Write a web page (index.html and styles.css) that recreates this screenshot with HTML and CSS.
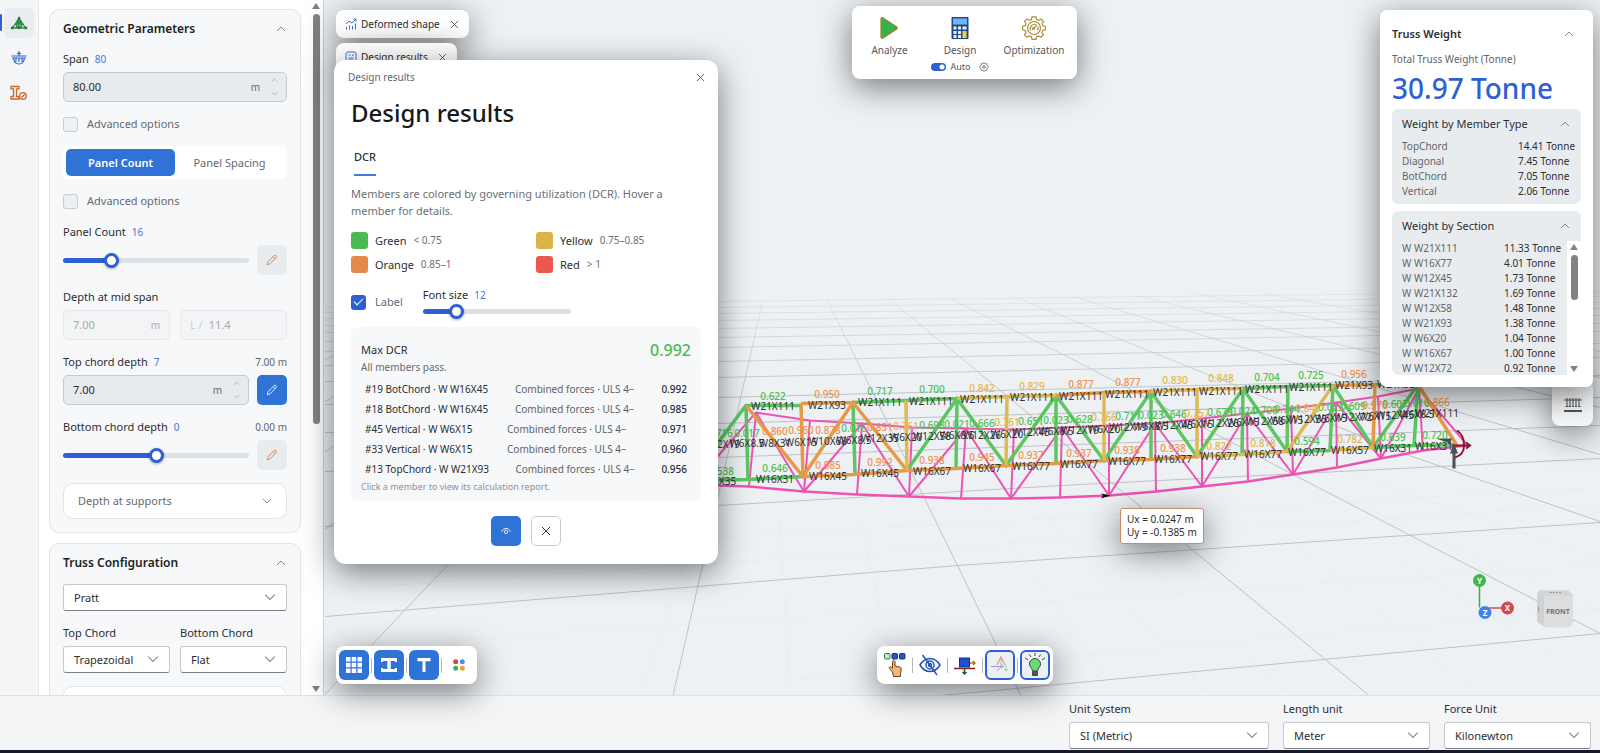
FILE: index.html
```html
<!DOCTYPE html>
<html lang="en">
<head>
<meta charset="utf-8">
<title>Truss Designer</title>
<link rel="stylesheet" href="styles.css">
</head>
<body>
<svg class="defs" aria-hidden="true">
  <symbol id="up" viewBox="0 0 10 10"><path d="M1 7l4-4 4 4" fill="none" stroke="currentColor"/></symbol>
  <symbol id="down" viewBox="0 0 10 10"><path d="M1 3l4 4 4-4" fill="none" stroke="currentColor"/></symbol>
  <symbol id="close" viewBox="0 0 10 10"><path d="M1 1l8 8M9 1l-8 8" fill="none" stroke="currentColor"/></symbol>
  <symbol id="pencil" viewBox="0 0 14 14"><path d="M1.500 12.500l.8-3.300 7-7.200a1.500 1.500 0 0 1 2.400 2.300l-7.100 7.300zM8.300 3.200l2.300 2.200" fill="none" stroke="currentColor" stroke-linejoin="round"/></symbol>
</svg>
<div class="app">
  <main class="workspace">
    <nav class="rail" aria-label="Modules">
      <button class="rail-btn active" aria-label="Geometry"><svg width="18" height="14" viewBox="0 0 18 14"><path d="M9 2L2.500 12h13zM9 2v10M9 2L6 12M9 2l3 10M5.500 8L9 12l3.500-4M5.500 8h7" fill="none" stroke="#2f8a45" stroke-width="1.300"/><g fill="#237638"><circle cx="9" cy="2" r="1.300"/><circle cx="2.200" cy="12" r="1.400"/><circle cx="9" cy="12" r="1.200"/><circle cx="15.800" cy="12" r="1.400"/></g></svg></button>
      <button class="rail-btn" aria-label="Loads"><svg width="16" height="16" viewBox="0 0 16 16" fill="none" stroke="#2f60d3" stroke-width="1.200"><path d="M8 1v5M6 3.500h4M.500 6h15M1 8h14M2.500 8C3 11.500 5 14 8 14s5-2.500 5.500-6M5 8.500v3M8 8.500v3.500M11 8.500v3"/></svg></button>
      <button class="rail-btn" aria-label="Sections"><svg width="18" height="16" viewBox="0 0 18 16" fill="none" stroke="#c9682c" stroke-width="1.300"><path d="M1 1.500h8v2.300H6.500v7.700H9v2.500H1v-2.500h2.500V3.800H1z"/><circle cx="13" cy="11" r="3.300" fill="#f3f5f7"/><path d="M11.500 12.500l3.300-3.300"/></svg></button>
    </nav>

    <aside class="side">
      <div class="side-list">
        <section class="card">
          <button class="card-title">Geometric Parameters<svg class="ic"><use href="#up"/></svg></button>
          <div class="group">
            <label class="label" for="span">Span <b>80</b></label>
            <div class="box"><input id="span" value="80.00"><span class="unit">m</span><span class="spin"><svg><use href="#up"/></svg><svg><use href="#down"/></svg></span></div>
          </div>
          <label class="check"><input type="checkbox">Advanced options</label>
          <div class="seg"><button class="on">Panel Count</button><button>Panel Spacing</button></div>
          <label class="check"><input type="checkbox">Advanced options</label>
          <div class="group">
            <label class="label" for="count">Panel Count <b>16</b></label>
            <div class="row"><input class="range p26" id="count" type="range" min="0" max="100" value="24"><button class="edit" aria-label="Edit panel count"><svg><use href="#pencil"/></svg></button></div>
          </div>
          <div class="group">
            <label class="label" for="mid">Depth at mid span</label>
            <div class="pair"><div class="box off"><input id="mid" value="7.00" disabled><span class="unit">m</span></div><div class="box off"><span class="prefix">L /</span><input aria-label="Span ratio" value="11.4" disabled></div></div>
          </div>
          <div class="group">
            <label class="label" for="top">Top chord depth <b>7</b><span class="end">7.00 m</span></label>
            <div class="row"><div class="box"><input id="top" value="7.00"><span class="unit">m</span><span class="spin"><svg><use href="#up"/></svg><svg><use href="#down"/></svg></span></div><button class="edit on" aria-label="Edit top chord depth"><svg><use href="#pencil"/></svg></button></div>
          </div>
          <div class="group">
            <label class="label" for="bot">Bottom chord depth <b>0</b><span class="end">0.00 m</span></label>
            <div class="row"><input class="range p50" id="bot" type="range" min="0" max="100" value="50"><button class="edit" aria-label="Edit bottom chord depth"><svg><use href="#pencil"/></svg></button></div>
          </div>
          <button class="expander">Depth at supports<svg class="ic"><use href="#down"/></svg></button>
        </section>
        <section class="card">
          <button class="card-title">Truss Configuration<svg class="ic"><use href="#up"/></svg></button>
          <div class="select"><select aria-label="Truss type"><option>Pratt</option></select><svg><use href="#down"/></svg></div>
          <div class="pair">
            <div class="group"><label class="label" for="tc">Top Chord</label><div class="select"><select id="tc"><option>Trapezoidal</option></select><svg><use href="#down"/></svg></div></div>
            <div class="group"><label class="label" for="bc">Bottom Chord</label><div class="select"><select id="bc"><option>Flat</option></select><svg><use href="#down"/></svg></div></div>
          </div>
          <button class="expander" aria-label="More options"></button>
        </section>
      </div>
      <div class="scroll"><i class="tri up"></i><i class="thumb"></i><i class="tri down"></i></div>
    </aside>

    <section class="stage">
      <svg class="scene" viewBox="324 0 1276 696" preserveAspectRatio="xMidYMid slice">
        <defs><linearGradient id="fade" x1="0" y1="290" x2="0" y2="400" gradientUnits="userSpaceOnUse"><stop offset="0" stop-color="#c3c9ce" stop-opacity=".25"/><stop offset="1" stop-color="#bcc2c7"/></linearGradient></defs>
        <g fill="none" stroke="url(#fade)">
          <path d="M700 300L450 563 325 695M763 300L673 696M827 300L930 510 1021 696M889 300L963 360 1204 560 1369 696M952 300L1073 360 1297 477 1453 558 1600 634M1016 298L1412 457 1600 522M1073 297L1600 455M1136 296L1600 408M1200 295L1600 378M1262 294L1600 352M636 302L325 530M572 304L325 452M508 306L325 402M444 308L325 360"/>
          <path d="M930 697L1600 634M325 617L958 566 1600 523M325 527L718 506 1080 485 1600 459M325 472L718 458 1600 426M325 433L718 424 1600 398M325 405L718 398 1600 376M325 382L718 378 1600 358M325 366L718 362 1600 344M325 352L718 348 1600 332M325 342L718 338 1600 324M325 333L718 329 1600 316M325 326L718 321 1600 309M325 319L718 314 1600 303M325 313L718 308 1600 297M325 308L718 302 1600 292"/>
        </g>
        <g fill="none" stroke="#dfe4e8" stroke-width=".7" opacity=".5">
          <path d="M325 648L1600 566M325 590L1600 505M325 560L1600 488M800 680L1600 610M690 550L640 696M780 520L790 696M860 520L900 696M980 500L1120 696M1040 510L1210 696M1110 530L1290 696M1290 540L1480 696M1400 560L1560 660M1300 480L1600 610M1340 470L1600 560"/>
        </g>
        <g fill="none" stroke="#ee53b4" stroke-width="2" stroke-linejoin="round">
          <path stroke-width="2.500" d="M700 485L718 486 749 487 804 492 857 495 909 497 961 499 1011 499 1060 498 1109 496 1156 492 1202 487 1248 482 1293 475 1337 468 1381 459 1423 451 1466 446"/>
          <path d="M756 413L810 421 862 424 912 428 966 429 1014 430 1062 428 1109 426 1155 424 1202 419 1247 414 1291 409 1336 403 1378 397 1419 389"/>
          <path d="M756 413L749 487M810 421L804 492M862 424L857 495M912 428L909 497M966 429L961 499M1014 430L1011 499M1062 428L1060 498M1109 426V496M1155 424L1156 492M1202 419V487M1247 414L1248 482M1291 409L1293 475M1336 403L1337 468M1378 397L1381 459M1419 389L1423 451"/>
          <path d="M700 477L756 413 804 492 862 424 909 497 966 429 1011 499 1062 428 1109 496 1155 424 1202 487 1247 414 1293 475 1336 403 1381 459 1419 389 1466 444"/>
        </g>
        <g fill="none" stroke-width="3.500">
          <path stroke="#5dc561" d="M700 467L746 406H801M853 403L906 401 957 399M1243 389L1288 387 1333 386M1375 385H1418M700 481L748 480 803 477M1287 452L1330 451M1373 448L1414 446 1455 445M746 406L748 480M853 403L855 474M957 399L956 469M1056 396V464M1151 392V460M1243 389L1242 455M1288 387L1287 452M1333 386L1330 451M1418 385L1414 446M907 471L957 399 1006 466 1056 396 1104 461 1151 392 1197 457 1243 389 1287 452M1333 386L1373 448 1418 385"/>
          <path stroke="#e59a46" d="M801 404L853 403M1056 396L1104 393 1151 392M1333 386L1375 385M803 477L853 475 907 471 956 469 1006 466 1056 464 1104 461 1150 460 1197 457M801 404L803 477M1375 385L1373 448M746 406L803 477 853 403 907 471M1418 385L1457 446"/>
          <path stroke="#dfb951" d="M957 399L1007 397 1056 396M1151 392L1197 390 1243 389M1197 457L1242 455 1287 452M1330 451L1373 448M906 401L907 471M1007 397L1006 466M1104 393V461M1197 390V457M1287 452L1333 386"/>
        </g>
        <g stroke-width="2" fill="none"><path d="M1457 431C1462 434 1464 439 1464 446S1461 456 1455 458M1452 446H1470M1466 443l4 3-4 3" stroke="#8f1230"/><path d="M1454 469V450" stroke="#4a4f55" stroke-width="3"/><path d="M1450 454L1454 444 1458 454zM1436 439l16 0-2 5z" fill="#4a4f55"/><path d="M1101 494l10 2-10 3 2-3z" fill="#111"/></g>
        <text class="g"><tspan x="773" y="400">0.622</tspan><tspan x="880" y="395">0.717</tspan><tspan x="932" y="393">0.700</tspan><tspan x="1267" y="381">0.704</tspan><tspan x="1311" y="379">0.725</tspan><tspan x="724" y="475">.538</tspan><tspan x="775" y="472">0.646</tspan><tspan x="1307" y="445">0.594</tspan><tspan x="1393" y="441">0.639</tspan><tspan x="1435" y="439">0.720</tspan><tspan x="720" y="437">0.716</tspan><tspan x="747" y="437">0.017</tspan><tspan x="854" y="432">0.016</tspan><tspan x="932" y="429">0.698</tspan><tspan x="957" y="428">0.021</tspan><tspan x="982" y="427">0.666</tspan><tspan x="1031" y="425">0.651</tspan><tspan x="1056" y="424">0.023</tspan><tspan x="1080" y="423">0.628</tspan><tspan x="1128" y="420">0.711</tspan><tspan x="1151" y="419">0.023</tspan><tspan x="1174" y="418">0.646</tspan><tspan x="1220" y="416">0.679</tspan><tspan x="1243" y="415">0.024</tspan><tspan x="1265" y="414">0.700</tspan><tspan x="1287" y="413">0.744</tspan><tspan x="1331" y="411">0.023</tspan><tspan x="1353" y="410">0.609</tspan><tspan x="1395" y="408">0.607</tspan><tspan x="1417" y="407">0.016</tspan></text>
        <text class="o"><tspan x="827" y="398">0.950</tspan><tspan x="1081" y="388">0.877</tspan><tspan x="1128" y="386">0.877</tspan><tspan x="1354" y="378">0.956</tspan><tspan x="828" y="469">0.985</tspan><tspan x="880" y="466">0.992</tspan><tspan x="932" y="464">0.938</tspan><tspan x="982" y="461">0.945</tspan><tspan x="1031" y="459">0.937</tspan><tspan x="1079" y="457">0.937</tspan><tspan x="1127" y="454">0.938</tspan><tspan x="1173" y="452">0.938</tspan><tspan x="775" y="435">0.860</tspan><tspan x="801" y="434">0.960</tspan><tspan x="828" y="434">0.878</tspan><tspan x="880" y="431">0.851</tspan><tspan x="1375" y="409">0.976</tspan><tspan x="1437" y="406">0.866</tspan></text>
        <text class="y"><tspan x="982" y="392">0.842</tspan><tspan x="1032" y="390">0.829</tspan><tspan x="1175" y="384">0.830</tspan><tspan x="1221" y="382">0.848</tspan><tspan x="1219" y="450">0.822</tspan><tspan x="1263" y="447">0.818</tspan><tspan x="1350" y="443">0.782</tspan><tspan x="906" y="430">0.761</tspan><tspan x="1007" y="426">0.761</tspan><tspan x="1104" y="421">0.766</tspan><tspan x="1197" y="417">0.757</tspan><tspan x="1308" y="412">0.845</tspan></text>
        <text class="k"><tspan x="773" y="410">W21X111</tspan><tspan x="827" y="409">W21X93</tspan><tspan x="880" y="406">W21X111</tspan><tspan x="931" y="405">W21X111</tspan><tspan x="982" y="403">W21X111</tspan><tspan x="1032" y="401">W21X111</tspan><tspan x="1081" y="400">W21X111</tspan><tspan x="1127" y="398">W21X111</tspan><tspan x="1175" y="396">W21X111</tspan><tspan x="1221" y="395">W21X111</tspan><tspan x="1267" y="393">W21X111</tspan><tspan x="1311" y="391">W21X111</tspan><tspan x="1354" y="389">W21X93</tspan><tspan x="1396" y="388">W21X93</tspan></text>
        <text class="k"><tspan x="720" y="485">W8X35</tspan><tspan x="775" y="483">W16X31</tspan><tspan x="828" y="480">W16X45</tspan><tspan x="880" y="477">W16X45</tspan><tspan x="932" y="475">W16X67</tspan><tspan x="982" y="472">W16X67</tspan><tspan x="1031" y="470">W16X77</tspan><tspan x="1079" y="468">W16X77</tspan><tspan x="1127" y="465">W16X77</tspan><tspan x="1173" y="463">W16X77</tspan><tspan x="1219" y="460">W16X77</tspan><tspan x="1263" y="458">W16X77</tspan><tspan x="1307" y="456">W16X77</tspan><tspan x="1350" y="454">W16X57</tspan><tspan x="1393" y="452">W16X31</tspan><tspan x="1434" y="450">W16X31</tspan></text>
        <text class="k"><tspan x="721" y="448">W12X19</tspan><tspan x="747" y="447">W6X8.5</tspan><tspan x="775" y="447">W8X31</tspan><tspan x="801" y="446">W6X15</tspan><tspan x="828" y="445">W10X68</tspan><tspan x="854" y="444">W6X8.5</tspan><tspan x="880" y="442">W12X35</tspan><tspan x="906" y="441">W6X20</tspan><tspan x="932" y="440">W12X58</tspan><tspan x="957" y="439">W6X8.5</tspan><tspan x="982" y="439">W12X26</tspan><tspan x="1007" y="438">W6X20</tspan><tspan x="1031" y="436">W12X45</tspan><tspan x="1056" y="435">W6X8.5</tspan><tspan x="1080" y="434">W12X19</tspan><tspan x="1104" y="433">W6X20</tspan><tspan x="1128" y="431">W12X19</tspan><tspan x="1151" y="430">W6X8.5</tspan><tspan x="1174" y="429">W12X45</tspan><tspan x="1197" y="428">W6X15</tspan><tspan x="1220" y="427">W12X26</tspan><tspan x="1243" y="426">W6X15</tspan><tspan x="1265" y="425">W12X58</tspan><tspan x="1287" y="424">W6X15</tspan><tspan x="1308" y="423">W12X35</tspan><tspan x="1331" y="422">W6X15</tspan><tspan x="1353" y="421">W12X72</tspan><tspan x="1375" y="420">W6X15</tspan><tspan x="1395" y="419">W12X45</tspan><tspan x="1417" y="418">W6X8.5</tspan><tspan x="1437" y="417">W21X111</tspan></text>
        <g stroke-width="1.500"><path d="M1479.500 581V608" stroke="#3cae42"/><path d="M1485 608.500H1507" stroke="#e04b4b"/></g>
        <circle cx="1479.500" cy="581" r="6.500" fill="#45b649"/><circle cx="1507.500" cy="608.500" r="6.500" fill="#d6484b"/><circle cx="1485" cy="613" r="6.500" fill="#4282e6"/>
        <text class="axis"><tspan x="1479.500" y="584">Y</tspan><tspan x="1507.500" y="611.500">X</tspan><tspan x="1485" y="616">Z</tspan></text>
        <path d="M1539 591h29l5 5v27l-3 5h-25l-8-6v-27z" fill="#dcdddf"/><path d="M1537 595l8 1h28l-5-5h-29z" fill="#d3d4d6"/><path d="M1537 595l7 1v31l-7-5z" fill="#d0d1d3"/><path d="M1550 593h12" stroke="#999" stroke-dasharray="2 1"/><path d="M1538.500 607v5" stroke="#999"/>
        <text class="cube" x="1558" y="614">FRONT</text>
      </svg>

      <div class="chip one"><svg width="12" height="12" viewBox="0 0 12 12" fill="none" stroke="#3c6fd8"><path d="M1.500 11.500V9M4.500 11.500V7.500M7.500 11.500V8M10.500 11.500V5.500M1 6l3-3 3 2 4-4M8.500 1H11v2.500"/></svg><span>Deformed shape</span><button class="x" aria-label="Close Deformed shape"><svg><use href="#close"/></svg></button></div>
      <div class="chip two"><svg width="12" height="12" viewBox="0 0 12 12" fill="none" stroke="#3c6fd8"><rect x="1" y="1" width="10" height="10" rx="2"/><path d="M3.500 4h2M7 4h2M3.500 7h5M3.500 9h5"/></svg><span>Design results</span><button class="x" aria-label="Close Design results tab"><svg><use href="#close"/></svg></button></div>

      <div class="tools">
        <div class="tool"><button><svg width="24" height="24" viewBox="0 0 24 24"><path d="M4 3c0-1.200 1-1.600 2-1l13.500 8.800c.9.600.9 1.800 0 2.400L6 22c-1 .6-2 .1-2-1z" fill="#35b24a" stroke="#a87b2f" stroke-width="1.200"/></svg>Analyze</button></div>
        <div class="tool"><button><svg width="24" height="24" viewBox="0 0 24 24"><rect x="3.500" y="1" width="17" height="22" rx="1" fill="#24478a"/><rect x="5" y="2.500" width="14" height="6" fill="#6db8f6"/><g fill="#e8f1fb"><path d="M5.500 10.500h3v3h-3zM10 10.500h3v3h-3zM14.500 10.500h4v3h-4zM5.500 15h3v3h-3zM10 15h3v3h-3zM5.500 19h3v3h-3zM10 19h3v3h-3z"/></g><path d="M14.500 15h4v7h-4z" fill="#f2cf3d"/></svg>Design</button>
          <div class="auto"><label><input type="checkbox" role="switch" checked>Auto</label><button aria-label="Design settings"><svg width="10" height="10" viewBox="0 0 10 10" fill="none" stroke="#777b80"><path d="M5 .7l1.200 1 1.600-.1.400 1.600L9.400 5 8.200 6.700l-.4 1.700-1.600-.1L5 9.300l-1.200-1-1.600.1-.4-1.700L.6 5l1.200-1.800.4-1.600 1.600.1z"/><circle cx="5" cy="5" r="1.300"/></svg></button></div></div>
        <div class="tool"><button><svg width="24" height="24" viewBox="0 0 24 24" fill="none" stroke="#ab8c3e" stroke-width="1.200"><path d="M10 .8h4l.6 2.700 2 .9 2.400-1.500 2.500 2.600-1.400 2.300.8 2 2.600.7v3.200l-2.700.8-.8 2 1.500 2.300-2.600 2.500-2.300-1.400-2 .9-.6 2.500h-4l-.6-2.600-2-.8L5 21.300l-2.500-2.500L4 16.400l-.9-2-2.600-.7v-3.300l2.600-.7.9-2-1.500-2.300L5 2.900l2.400 1.500 2-.9z"/><circle cx="12" cy="12" r="6.500"/><path d="M8.500 14.500a4.500 4.500 0 0 1 5.500-6M16 10.500a4.500 4.500 0 0 1-.8 4M11.500 12.500l3.500-3.500"/><circle cx="11.500" cy="12.500" r="1"/></svg>Optimization</button></div>
      </div>

      <div class="dialog" role="dialog" aria-label="Design results">
        <header><span>Design results</span><button class="x" aria-label="Close dialog"><svg><use href="#close"/></svg></button></header>
        <h1>Design results</h1>
        <button class="tab">DCR</button>
        <p class="intro">Members are colored by governing utilization (DCR). Hover a member for details.</p>
        <div class="legend">
          <div><i class="sw green"></i>Green<small>&lt; 0.75</small></div><div><i class="sw yellow"></i>Yellow<small>0.75–0.85</small></div>
          <div><i class="sw orange"></i>Orange<small>0.85–1</small></div><div><i class="sw red"></i>Red<small>&gt; 1</small></div>
        </div>
        <div class="opts"><label class="check"><input type="checkbox" checked>Label</label><div class="fs"><label class="label" for="fs">Font size <b>12</b></label><input class="range p23" id="fs" type="range" min="0" max="100" value="20"></div></div>
        <div class="summary">
          <div class="max"><span>Max DCR</span><strong>0.992</strong></div>
          <p>All members pass.</p>
          <button class="member"><span>#19 BotChord · W W16X45</span><em>Combined forces · ULS 4−</em><b>0.992</b></button>
          <button class="member"><span>#18 BotChord · W W16X45</span><em>Combined forces · ULS 4−</em><b>0.985</b></button>
          <button class="member"><span>#45 Vertical · W W6X15</span><em>Combined forces · ULS 4−</em><b>0.971</b></button>
          <button class="member"><span>#33 Vertical · W W6X15</span><em>Combined forces · ULS 4−</em><b>0.960</b></button>
          <button class="member"><span>#13 TopChord · W W21X93</span><em>Combined forces · ULS 4−</em><b>0.956</b></button>
          <p class="hint">Click a member to view its calculation report.</p>
        </div>
        <div class="actions"><button class="edit on" aria-label="Show"><svg viewBox="0 0 14 14" fill="none" stroke="currentColor"><path d="M2 8c1-3 3-4 5-4s4 1 5 4"/><circle cx="7" cy="8" r="2"/></svg></button><button class="edit line" aria-label="Dismiss"><svg class="small"><use href="#close"/></svg></button></div>
      </div>

      <button class="under" aria-label="Section layout"><svg width="18" height="16" viewBox="0 0 18 16" fill="none" stroke="#50545a"><path d="M0 3h18M3 1v9M6 1v9M9 1v9M12 1v9M15 1v9M1.500 9.500h3M5 9.500h2M8 9.500h2M11 9.500h2M14 9.500h2.500"/><path d="M0 14h18" stroke-width="2"/></svg></button>
      <aside class="weight">
        <button class="w-title">Truss Weight<svg class="ic"><use href="#up"/></svg></button>
        <p>Total Truss Weight (Tonne)</p>
        <strong>30.97 Tonne</strong>
        <section class="wbox">
          <button class="w-sub">Weight by Member Type<svg class="ic"><use href="#up"/></svg></button>
          <table class="t1"><tr><th>TopChord</th><td>14.41 Tonne</td></tr><tr><th>Diagonal</th><td>7.45 Tonne</td></tr><tr><th>BotChord</th><td>7.05 Tonne</td></tr><tr><th>Vertical</th><td>2.06 Tonne</td></tr></table>
        </section>
        <section class="wbox list">
          <button class="w-sub">Weight by Section<svg class="ic"><use href="#up"/></svg></button>
          <div class="wscroll">
            <table class="t2"><tr><th>W W21X111</th><td>11.33 Tonne</td></tr><tr><th>W W16X77</th><td>4.01 Tonne</td></tr><tr><th>W W12X45</th><td>1.73 Tonne</td></tr><tr><th>W W21X132</th><td>1.69 Tonne</td></tr><tr><th>W W12X58</th><td>1.48 Tonne</td></tr><tr><th>W W21X93</th><td>1.38 Tonne</td></tr><tr><th>W W6X20</th><td>1.04 Tonne</td></tr><tr><th>W W16X67</th><td>1.00 Tonne</td></tr><tr><th>W W12X72</th><td>0.92 Tonne</td></tr></table>
            <div class="scroll"><i class="tri up"></i><i class="thumb"></i><i class="tri down"></i></div>
          </div>
        </section>
      </aside>

      <div class="tip">Ux = 0.0247 m<br>Uy = -0.1385 m</div>

      <div class="bar left">
        <button class="on" aria-label="Grid"><svg width="16" height="16" viewBox="0 0 16 16" fill="#fff"><path d="M0 0h4.500v4.500H0zM5.700 0h4.500v4.500H5.700zM11.500 0H16v4.500h-4.500zM0 5.700h4.500v4.500H0zM5.700 5.700h4.500v4.500H5.700zM11.500 5.700H16v4.500h-4.500zM0 11.500h4.500V16H0zM5.700 11.500h4.500V16H5.700zM11.500 11.500H16V16h-4.500z"/></svg></button><hr>
        <button class="on" aria-label="Sections"><svg width="16" height="16" viewBox="0 0 16 16" fill="#fff"><path d="M0 1h16v4h-2V4H9.700v8H14v-1h2v4H0v-4h2v1h4.300V4H2v1H0z"/></svg></button><hr>
        <button class="on" aria-label="Labels"><svg width="16" height="16" viewBox="0 0 16 16" fill="#fff"><path d="M1.500 1h13v3.200H9.500V15h-3V4.200h-5z"/></svg></button><hr>
        <button aria-label="Colors"><svg width="12" height="12" viewBox="0 0 12 12"><circle cx="2.700" cy="2.700" r="2.500" fill="#d64545"/><circle cx="9.300" cy="2.700" r="2.500" fill="#4d8fe8"/><circle cx="2.700" cy="9.300" r="2.500" fill="#41b160"/><circle cx="9.300" cy="9.300" r="2.500" fill="#f0a02f"/></svg></button>
      </div>

      <div class="bar mid">
        <button aria-label="Select"><svg width="24" height="26" viewBox="0 0 24 26"><rect x="1.500" y="1.500" width="5.500" height="5.500" rx="1" fill="#bfeacb" stroke="#2e7d4a"/><rect x="9" y="1.500" width="5.500" height="5.500" rx="1" fill="#2c56c4" stroke="#1b3065"/><rect x="16.500" y="1.500" width="5.500" height="5.500" rx="1" fill="#2c56c4" stroke="#1b3065"/><path d="M9.500 20l-3-3.500c-1-1.500.8-2.500 2-1.200l1 1V10c0-2 2.500-2 2.500 0v4l5 1.200c1 .3 1.300 1 1.300 2l-.8 4.300v3H10.500z" fill="#f0b57c" stroke="#6a4320"/></svg></button><hr>
        <button aria-label="Hide"><svg width="22" height="22" viewBox="0 0 22 22" fill="none" stroke="#2455b5" stroke-width="1.500"><path d="M1 11c3-5 6.500-6.500 10-6.500S18 6 21 11c-3 5-6.500 6.500-10 6.500S4 16 1 11z"/><circle cx="11" cy="11" r="4"/><circle cx="11" cy="11" r="1.500"/><path d="M3.500 1L18 21"/></svg></button><hr>
        <button aria-label="Section cut"><svg width="24" height="22" viewBox="0 0 24 22" fill="none"><rect x="6.500" y="4" width="10" height="9" fill="#1d4fd0" stroke="#14337f"/><path d="M1 14.500h21" stroke="#8d1d1d" stroke-width="1.500"/><path d="M17 9h5M20 7l2 2-2 2" stroke="#b8742a" stroke-width="1.500"/><path d="M11.500 14v6M9.500 18l2 2 2-2" stroke="#225b35" stroke-width="1.500"/></svg></button><hr>
        <button class="sel" aria-label="Axes"><svg width="22" height="22" viewBox="0 0 22 22" fill="none"><path d="M8 11l4-8 4 8" stroke="#e79a92" stroke-width="1.300"/><path d="M2 12.500h13M13 10.500v4" stroke="#9a9ae6"/><path d="M12 5v8M17 11v6M15 15l2 2 2-2" stroke="#8fcf98"/><path d="M8 17l4-4" stroke="#c08cd0"/></svg></button><hr>
        <button class="sel" aria-label="Lighting"><svg width="24" height="26" viewBox="0 0 24 26" fill="none" stroke="#454a50"><path d="M12 1v3M6.500 2.500L8 5M17.500 2.500L16 5M2 6l3 1.800M22 6l-3 1.800"/><path d="M9.500 19c0-3-3-3.500-3-7a5.500 5.500 0 0 1 11 0c0 3.500-3 4-3 7z" fill="#63dc74"/><path d="M9.500 19.500h5v4h-5z" fill="#555"/></svg></button>
      </div>
    </section>
  </main>

  <footer class="foot">
    <div class="group wide"><label class="label" for="us">Unit System</label><div class="select"><select id="us"><option>SI (Metric)</option></select><svg><use href="#down"/></svg></div></div>
    <div class="group"><label class="label" for="lu">Length unit</label><div class="select"><select id="lu"><option>Meter</option></select><svg><use href="#down"/></svg></div></div>
    <div class="group"><label class="label" for="fu">Force Unit</label><div class="select"><select id="fu"><option>Kilonewton</option></select><svg><use href="#down"/></svg></div></div>
  </footer>
</div>
</body>
</html>
```
FILE: styles.css
```css
* { box-sizing: border-box; }
body { margin: 0; font: 11px/18px "Noto Sans", "Open Sans", sans-serif; color: #2b2e32; background: #f3f5f7; }
button, input, select { font: inherit; color: inherit; margin: 0; }
button { border: 0; padding: 0; background: none; }
p, h1 { margin: 0; }
.defs { display: none; }
.app { display: flex; flex-direction: column; height: 100vh; overflow: hidden; border-bottom: 3px solid #17192a; }
.workspace { display: flex; flex: 1; min-height: 0; }
.ic { width: 10px; height: 10px; color: #85898d; flex: none; }

.rail { width: 39px; padding: 8px 4px; display: flex; flex-direction: column; gap: 5px; border-right: 1px solid #e4e7ea; background: #f3f5f7; }
.rail-btn { height: 30px; border-radius: 6px; display: grid; place-items: center; position: relative; }
.rail-btn.active { background: #e9edef; }
.rail-btn.active::before { content: ""; position: absolute; left: -4px; top: 6px; width: 2px; height: 17px; background: #2f60d3; border-radius: 1px; }

.side { width: 285px; display: flex; background: #fff; border-right: 1px solid #cfd3d6; overflow: hidden; }
.side-list { flex: 1; padding: 9px 8px 0 10px; overflow: hidden; display: flex; flex-direction: column; gap: 10px; }
.card { flex: none; border: 1px solid #e2e5e8; border-radius: 10px; background: #f6f8fa; padding: 9px 13px 13px; display: flex; flex-direction: column; gap: 13px; }
.card-title { display: flex; align-items: center; justify-content: space-between; height: 20px; padding-right: 1px; margin-bottom: -2px; font-size: 12px; font-weight: 600; color: #1c1f23; }
.group { display: flex; flex-direction: column; gap: 4px; min-width: 0; }
.label { display: flex; height: 18px; gap: 6px; white-space: nowrap; }
.label b { font-weight: 400; color: #4a74d6; font-size: 10px; }
.end { margin-left: auto; font-size: 10px; color: #62666b; }
.box { flex: 1 1 auto; min-width: 0; height: 30px; display: flex; align-items: center; padding: 0 9px; border: 1px solid #c6cacd; border-radius: 5px; background: #e8ebed; }
.box input { flex: 1; min-width: 0; width: 10px; border: 0; background: none; padding: 0; outline: 0; }
.unit { font-size: 10px; color: #666a6f; }
.spin { display: flex; flex-direction: column; justify-content: space-between; height: 20px; margin-left: 11px; margin-right: -1px; }
.spin svg { width: 7px; height: 7px; color: #9da1a5; }
.box.off { background: #f2f4f6; border-color: #e6e8eb; color: #a6aaae; }
.box.off input { color: #a6aaae; }
.box.off .unit { color: #a6aaae; }
.prefix { color: #ccd0d3; margin-right: 6px; }
.check { display: flex; align-items: center; gap: 9px; height: 18px; color: #666a6f; }
.check input { appearance: none; width: 15px; height: 15px; border: 1px solid #c9cdd0; border-radius: 3px; background: #eef1f3; }
.check input:checked { border: 0; background: #2f60d3; display: grid; place-items: center; }
.check input:checked::after { content: ""; width: 8px; height: 4px; border: solid #fff; border-width: 0 0 1px 1px; transform: rotate(-45deg); margin-bottom: 3px; }
.seg { display: flex; height: 33px; padding: 3px; border-radius: 5px; background: #fff; }
.seg button { flex: 1; border-radius: 5px; color: #666a6f; }
.seg .on { background: #2f73d6; color: #fff; font-weight: 600; }
.row { display: flex; align-items: center; gap: 8px; height: 30px; }
.pair { display: grid; grid-template-columns: 1fr 1fr; gap: 10px; }
.edit { width: 30px; height: 30px; flex: none; display: grid; place-items: center; border-radius: 5px; background: #e9ecee; color: #c9804f; }
.edit svg { width: 12px; height: 12px; }
.edit .small { width: 10px; height: 10px; }
.edit.on { background: #2f73d6; color: #fff; }
.edit.line { background: #fff; border: 1px solid #c9cccf; color: #33363a; }
.range { appearance: none; flex: 1; min-width: 0; width: 100%; height: 16px; background: none; }
.range::-webkit-slider-runnable-track { height: 5px; border-radius: 3px; background: linear-gradient(90deg, #2f60d3 var(--p), #dee1e4 var(--p)); }
.range::-webkit-slider-thumb { appearance: none; width: 15px; height: 15px; margin-top: -5px; border: 3px solid #2f60d3; border-radius: 50%; background: #fff; box-shadow: 0 1px 3px #0005; }
.p26 { --p: 26%; }
.p50 { --p: 50%; }
.p23 { --p: 23%; }
.expander { height: 36px; display: flex; align-items: center; justify-content: space-between; padding: 0 14px; border: 1px solid #e1e4e7; border-radius: 10px; background: #fff; color: #666a6f; }
.select { position: relative; height: 27px; }
.select select { appearance: none; width: 100%; height: 100%; padding: 0 10px; border: 1px solid #c6c9cc; border-bottom-color: #7c8084; border-radius: 3px; background: #fff; }
.select svg { position: absolute; right: 11px; top: 7px; width: 12px; height: 12px; color: #8a8e92; pointer-events: none; }
.scroll { width: 14px; flex: none; display: flex; flex-direction: column; align-items: center; padding: 3px 0; }
.thumb { width: 7px; height: 410px; border-radius: 4px; background: #828282; margin: 5px 0 auto; }
.tri { width: 0; height: 0; border: 4px solid transparent; }
.tri.up { border-bottom: 6px solid #828282; border-top: 0; }
.tri.down { border-top: 6px solid #828282; border-bottom: 0; }

.stage { flex: 1; min-width: 0; position: relative; background: #edf1f4; }
.scene { position: absolute; inset: 0; width: 100%; height: 100%; }
.scene text { font-size: 10px; text-anchor: middle; }
.g, .o, .y { font-weight: 500; }
.g { fill: #4fbf53; }
.o { fill: #f0904d; }
.y { fill: #e3b64a; }
.k { fill: #2e3135; }
.scene .axis { font-size: 8px; font-weight: 700; fill: #fff; }
.scene .cube { font-size: 7px; font-weight: 700; fill: #707276; }
.chip, .tools, .dialog, .weight, .bar, .under, .tip { position: absolute; background: #fff; box-shadow: 0 8px 32px rgba(0, 0, 0, .5); }
.chip { left: 12px; height: 28px; border-radius: 8px; display: flex; align-items: center; gap: 4px; padding: 0 9px; font-size: 10px; }
.chip.one { top: 10px; }
.chip.two { top: 43px; }
.x { width: 10px; height: 10px; display: grid; place-items: center; color: #55595d; }
.x svg { width: 9px; height: 9px; }
.chip .x { margin-left: 6px; }

.tools { left: 528px; top: 6px; width: 225px; height: 73px; border-radius: 8px; display: grid; grid-template-columns: 75px 66px 1fr; padding: 10px 2px 0 0; color: #54585d; }
.tool { display: flex; flex-direction: column; align-items: center; font-size: 10px; }
.tool > button { display: flex; flex-direction: column; align-items: center; gap: 1px; }
.auto { display: flex; align-items: center; gap: 8px; height: 16px; font-size: 9px; }
.auto label { display: flex; align-items: center; gap: 4px; }
.auto button { display: flex; }
.auto input { appearance: none; width: 15px; height: 8px; border-radius: 4px; background: radial-gradient(circle at 11px 4px, #fff 2px, #2f60d3 3px); }

.dialog { left: 10px; top: 60px; width: 384px; border-radius: 12px; padding: 8px 17px 18px; }
.dialog header { display: flex; justify-content: space-between; align-items: center; height: 18px; margin: 0 2px 0 -3px; font-size: 10px; line-height: 18px; color: #62666b; }
.dialog .x { margin-right: -6px; }
h1 { font-size: 24px; line-height: 32px; font-weight: 500; color: #17191c; margin: 11px 0 19px; }
.tab { display: block; margin-left: 3px; height: 28px; border-bottom: 2px solid #3f7ae0; font-weight: 500; line-height: 18px; padding-bottom: 8px; }
.intro { line-height: 17px; color: #6b6f74; margin: 9px 0 13px; }
.legend { display: grid; grid-template-columns: 1fr 1fr; gap: 7px 20px; line-height: 17px; }
.legend div { display: flex; align-items: center; gap: 7px; }
.legend small { font-size: 10px; color: #6b6f74; }
.sw { width: 17px; height: 17px; border-radius: 3px; }
.green { background: #4cb953; }
.yellow { background: #dcb348; }
.orange { background: #e68a49; }
.red { background: #ec584e; }
.opts { display: flex; align-items: center; gap: 20px; margin-top: 13px; height: 32px; }
.fs { width: 148px; height: 32px; }
.fs .range { display: block; height: 14px; }
.summary { margin: 9px 0 15px; padding: 14px 10px 6px; border-radius: 6px; background: #f6f8fa; }
.summary p { font-size: 10px; line-height: 16px; color: #666a6f; }
.max { display: flex; justify-content: space-between; align-items: center; height: 18px; }
.max strong { font-size: 16px; font-weight: 500; color: #4fb854; }
.member { display: flex; justify-content: space-between; width: 100%; padding: 0 4px; line-height: 20px; font-size: 10px; }
.member:first-of-type { margin-top: 4px; }
.member em { font-style: normal; color: #5f6368; }
.member b { font-weight: 500; }
.summary .hint { color: #8e9296; font-size: 9px; }
.actions { display: flex; justify-content: center; gap: 10px; }

.weight { right: 7px; top: 10px; width: 213px; border-radius: 7px; padding: 15px 12px 12px; }
.w-title, .w-sub { display: flex; width: 100%; justify-content: space-between; align-items: center; height: 18px; color: #2b2e32; }
.w-title { font-weight: 600; padding-right: 7px; }
.weight p { font-size: 10px; color: #5f6368; margin-top: 7px; }
.weight strong { display: block; font-size: 28px; line-height: 40px; height: 40px; font-weight: 500; color: #2f60d3; white-space: nowrap; }
.wbox { border-radius: 6px; background: #e9ecef; padding: 6px 0 5px 10px; margin-top: 1px; }
.wbox.list { margin-top: 7px; padding-bottom: 0; }
.w-sub { padding-right: 11px; }
table { border-collapse: collapse; width: 100%; font-size: 10px; line-height: 15px; }
th, td { padding: 0; text-align: left; font-weight: 400; white-space: nowrap; }
th { color: #62666b; }
td { width: 63px; }
.t1 { margin-top: 6px; }
.wscroll { display: flex; margin-top: 6px; height: 134px; overflow: hidden; }
.wscroll .scroll { background: #fff; height: 134px; }
.wscroll .thumb { height: 45px; }
.under { right: 7px; top: 380px; width: 41px; height: 46px; border-radius: 8px; display: grid; place-items: center; padding-top: 4px; background: #f6f7f8; }

.tip { left: 796px; top: 508px; padding: 4px 6px; border: 1px solid #c98a62; border-radius: 3px; font-size: 10px; line-height: 13px; white-space: nowrap; }
.bar { bottom: 11px; height: 38px; border-radius: 8px; display: flex; align-items: center; gap: 2px; padding: 0 3px; }
.bar hr { width: 1px; height: 15px; margin: 0; border: 0; background: #b3b6b9; }
.bar button { width: 30px; height: 30px; border-radius: 6px; display: grid; place-items: center; }
.bar .on { background: #2f73d6; }
.bar .sel { background: #edf0f3; border: 2px solid #2f60d3; }
.bar.left { left: 12px; }
.bar.mid { left: 553px; }

.foot { display: flex; justify-content: flex-end; gap: 14px; padding: 4px 9px 1px; border-top: 1px solid #dfe2e5; background: #f3f5f7; }
.foot .group { width: 147px; }
.foot .wide { width: 200px; }
```
